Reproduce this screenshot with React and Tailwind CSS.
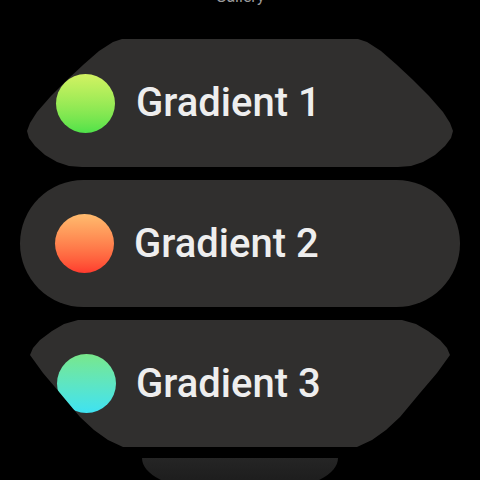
const chips = [
  {
    label: 'Gradient 1',
    dot: 'bg-gradient-to-b from-[#d2f262] to-[#4ee24a]',
    shape:
      'h-[128px] w-[426px] pl-[29px] gap-[21px] [clip-path:polygon(95px_0,331px_0,340px_3px,354px_12px,370px_26px,386px_41px,402px_57px,416px_73px,423px_84px,426px_92px,424px_99px,418px_107px,408px_116px,396px_123px,384px_127px,371px_128px,55px_128px,42px_127px,30px_123px,18px_116px,8px_107px,2px_99px,0_92px,3px_84px,10px_73px,24px_57px,40px_41px,56px_26px,72px_12px,86px_3px)]',
  },
  {
    label: 'Gradient 2',
    dot: 'bg-gradient-to-b from-[#ffbb6e] to-[#ff3a2e]',
    shape: 'h-[127px] w-[440px] pl-[35px] gap-[20px] rounded-full',
  },
  {
    label: 'Gradient 3',
    dot: 'bg-gradient-to-b from-[#78e78a] to-[#3ee2f2]',
    shape:
      'h-[127px] w-[420px] pl-[27px] gap-[20px] [clip-path:polygon(48px_0,372px_0,386px_4px,398px_11px,410px_20px,417px_28px,420px_35px,407px_53px,390px_73px,370px_97px,356px_110px,342px_120px,327px_127px,93px_127px,78px_120px,64px_110px,50px_97px,30px_73px,13px_53px,0_35px,3px_28px,10px_20px,22px_11px,34px_4px)]',
  },
]

export default function App() {
  return (
    <div className="flex h-[480px] w-[480px] flex-col items-center overflow-hidden bg-black font-['Roboto',sans-serif]">
      <div className="mt-[-13px] h-[20px] text-[16px] leading-[20px] text-[#9a9a9a]">Gallery</div>
      <div className="mt-[32px] flex flex-col items-center gap-[13px]">
        {chips.map((chip) => (
          <div key={chip.label} className={`flex shrink-0 items-center bg-[#302f2e] ${chip.shape}`}>
            <span className={`h-[59px] w-[59px] shrink-0 rounded-full ${chip.dot}`} />
            <span className="text-[40px] font-medium leading-none text-[#eeeeee]">{chip.label}</span>
          </div>
        ))}
        <div className="mt-[-2px] h-[30px] w-[196px] shrink-0 rounded-[0_0_60px_60px/0_0_30px_30px] bg-gradient-to-b from-[#252525] to-[#1b1b1b]" />
      </div>
    </div>
  )
}
